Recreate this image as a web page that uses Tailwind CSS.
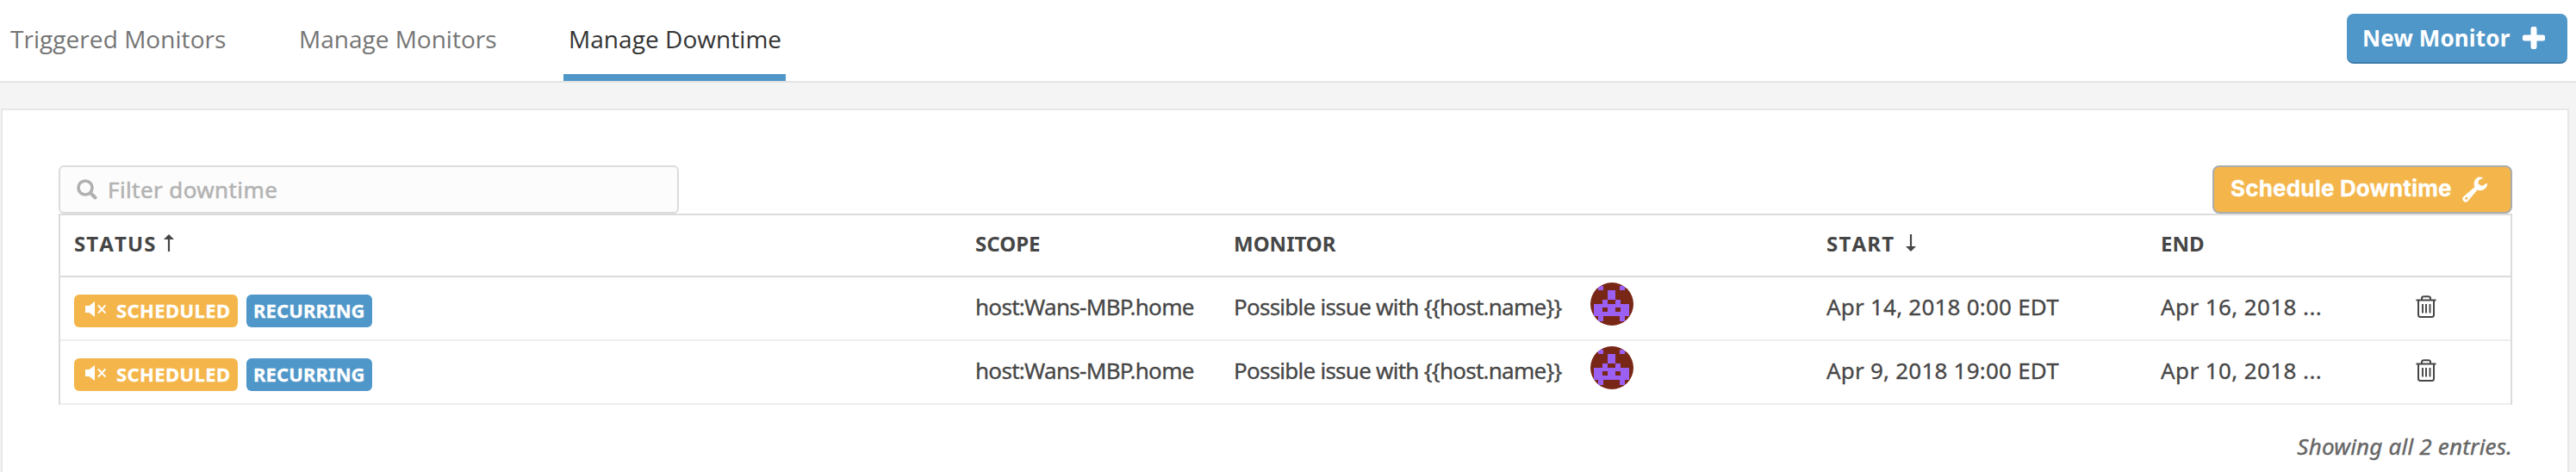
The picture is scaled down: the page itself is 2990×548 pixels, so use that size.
<!DOCTYPE html>
<html lang="en">
<head>
<meta charset="utf-8">
<title>Manage Downtime</title>
<script src="https://cdn.jsdelivr.net/npm/@tailwindcss/browser@4"></script>
</head>
<body class="h-[548px] w-[2990px] overflow-hidden bg-[#f4f4f4] font-['Noto_Sans',sans-serif] text-[26px] leading-[36px] text-[#464646]">
<svg class="hidden">
  <symbol id="avatar" viewBox="0 0 50 50"><rect width="50" height="50" fill="#782615"/><path fill="#9b5ff2" d="M9 4h6v5H9zM34 4h6v5h-6zM20 9h9v11h6v5h10v14h-5v6h-6v-6H15v6H9v-6H4V25h10v-5h6z"/><path fill="#782615" d="M20 20h9v5h-9zM14 29h6v5h-6zM29 29h6v5h-6z"/></symbol>
  <symbol id="mute" viewBox="0 0 24 18"><path fill="#fff" d="M0 5h4.500L11 0v18l-6.500-5H0z"/><path stroke="#fff" stroke-width="1.900" fill="none" d="M15 4.500l8.500 9M23.500 4.500L15 13.500"/></symbol>
  <symbol id="trash" viewBox="0 0 24 26"><g fill="none" stroke="#464646" stroke-width="2"><path d="M.5 5.500h23M7 5V3.500Q7 1.200 9.500 1.200h5Q17 1.200 17 3.500V5M3 6v16.500Q3 25 5.500 25h13Q21 25 21 22.500V6"/><path d="M8 10v10.500M12 10v10.500M16.500 10v10.500" stroke-width="1.900"/></g></symbol>
</svg>
<header class="flex h-24 justify-between border-b-2 border-[#e4e4e4] bg-white font-['Open_Sans',sans-serif]">
  <nav class="flex items-start pl-[5px] text-[28px] leading-[38px] whitespace-nowrap text-[#757575]">
    <a class="mr-[71px] h-[94px] w-[264px] px-[7px] pt-[26px] tracking-[0.05px]">Triggered Monitors</a>
    <a class="mr-[72px] h-[94px] w-[242px] px-[7px] pt-[26px]">Manage Monitors</a>
    <a class="h-[94px] w-[258px] border-b-8 border-[#5097c9] px-[6px] pt-[26px] tracking-[0.05px] text-[#333]">Manage Downtime</a>
  </nav>
  <button class="mt-4 mr-[10px] flex h-[58px] w-[256px] items-center rounded-lg border-b-2 border-[#3e7ca8] bg-[#5097c9] pl-[18px] font-['Noto_Sans',sans-serif] text-[26px] font-bold tracking-[0.15px] whitespace-nowrap text-white">
    <span class="w-[186px] text-left">New Monitor</span>
    <svg class="h-[26px] w-[26px]" viewBox="0 0 26 26"><path d="M13 3v20M3 13h20" stroke="#fff" stroke-width="7" stroke-linecap="round"/></svg>
  </button>
</header>
<main class="mt-[30px] ml-[1px] h-[440px] w-[2981px] border-2 border-[#e7e7e7] bg-white pl-[65px]">
  <div class="mt-16 flex w-[2848px] justify-between">
    <div class="flex h-14 w-[720px] items-center rounded-md border-2 border-[#dcdcdc] bg-[#fcfcfc] pl-[19px] text-[#b3b3b3]">
      <svg class="mr-3 h-6 w-6" viewBox="0 0 24 24" fill="none" stroke="#b0b0b0" stroke-linecap="round"><circle cx="10" cy="10" r="8" stroke-width="3.600"/><path d="M16.500 16.500l5 5" stroke-width="4"/></svg>
      <span class="tracking-[0.4px] [-webkit-text-stroke:0.5px]">Filter downtime</span>
    </div>
    <button class="flex h-14 w-[348px] items-center rounded-lg border-2 border-[#acacac] bg-[#f4b64b] pl-[19px] font-['Inter',sans-serif] text-[26px] font-bold tracking-[0.18px] whitespace-nowrap text-white">
      <span class="w-[269px] pb-0.5 text-left [-webkit-text-stroke:0.3px]">Schedule Downtime</span>
      <svg class="h-[30px] w-[30px]" viewBox="0 0 30 30"><path fill="#fff" fill-rule="evenodd" d="M24.500 1.200Q16 -1.500 14 6Q13 9 14.500 12L1.200 23.500Q-1 26 1.500 28.500Q4 31 6.500 28.500L17.500 15.500Q23 17.500 27 13.500Q29.500 11 29 7.500L23 11L18.500 8.500L19 4.500ZM4.800 23.800a1.500 1.500 0 1 0 .1 0Z"/></svg>
    </button>
  </div>
  <table class="w-[2848px] table-fixed border-separate border-spacing-0 border-x-2 border-t-2 border-[#dcdcdc] text-left whitespace-nowrap">
    <colgroup><col class="w-[1046px]"><col class="w-[300px]"><col class="w-[688px]"><col class="w-[388px]"><col class="w-[296px]"><col></colgroup>
    <thead><tr class="h-[72px] text-[24px] font-bold">
      <th class="border-b-2 border-[#dcdcdc] px-4 pb-1"><div class="flex items-center"><span class="tracking-[1.1px] [font-kerning:none]">STATUS</span><svg class="mb-0.5 ml-2 h-5 w-3" viewBox="0 0 12 20"><path d="M6 20V3" stroke="#464646" stroke-width="2.200"/><path d="M6 0l6 6H0z" fill="#464646"/></svg></div></th>
      <th class="border-b-2 border-[#dcdcdc] px-4 pb-1">SCOPE</th>
      <th class="border-b-2 border-[#dcdcdc] px-4 pb-1">MONITOR</th>
      <th class="border-b-2 border-[#dcdcdc] px-4 pb-1"><div class="flex items-center"><span class="tracking-[1.2px] [font-kerning:none]">START</span><svg class="mb-0.5 ml-[13px] h-5 w-3" viewBox="0 0 12 20"><path d="M6 0V17" stroke="#464646" stroke-width="2.200"/><path d="M6 20l6-6H0z" fill="#464646"/></svg></div></th>
      <th class="border-b-2 border-[#dcdcdc] px-4 pb-1">END</th>
      <th class="border-b-2 border-[#dcdcdc]"></th>
    </tr></thead>
    <tbody class="[-webkit-text-stroke:0.3px]">
      <tr class="h-[74px]">
        <td class="border-b-2 border-[#eee] px-4 pb-1"><div class="flex gap-[10px] pt-[10px] text-[22px] font-bold text-white"><span class="flex h-[38px] w-[190px] items-center rounded-md bg-[#f4b64b] pl-[13px] tracking-[0.4px]"><svg class="mr-3 mb-1 h-[18px] w-6"><use href="#mute"/></svg><span class="pb-0.5">SCHEDULED</span></span><span class="flex h-[38px] w-[146px] items-center rounded-md bg-[#5097c9] pb-0.5 pl-2 tracking-[0.1px]">RECURRING</span></div></td>
        <td class="border-b-2 border-[#eee] px-4 pb-1 tracking-[-0.7px]">host:Wans-MBP.home</td>
        <td class="border-b-2 border-[#eee] px-4 pb-1"><div class="flex items-center"><span class="w-[414px] tracking-[-0.75px]">Possible issue with {{host.name}}</span><svg class="mb-[6px] h-[50px] w-[50px] rounded-full"><use href="#avatar"/></svg></div></td>
        <td class="border-b-2 border-[#eee] px-4 pb-1 tracking-[0.22px]">Apr 14, 2018 0:00 EDT</td>
        <td class="border-b-2 border-[#eee] px-4 pb-1 tracking-[0.4px]">Apr 16, 2018 ...</td>
        <td class="border-b-2 border-[#eee] px-4 pb-1"><svg class="h-[26px] w-6"><use href="#trash"/></svg></td>
      </tr>
      <tr class="h-[74px]">
        <td class="border-b-2 border-[#eee] px-4 pb-1"><div class="flex gap-[10px] pt-[10px] text-[22px] font-bold text-white"><span class="flex h-[38px] w-[190px] items-center rounded-md bg-[#f4b64b] pl-[13px] tracking-[0.4px]"><svg class="mr-3 mb-1 h-[18px] w-6"><use href="#mute"/></svg><span class="pb-0.5">SCHEDULED</span></span><span class="flex h-[38px] w-[146px] items-center rounded-md bg-[#5097c9] pb-0.5 pl-2 tracking-[0.1px]">RECURRING</span></div></td>
        <td class="border-b-2 border-[#eee] px-4 pb-1 tracking-[-0.7px]">host:Wans-MBP.home</td>
        <td class="border-b-2 border-[#eee] px-4 pb-1"><div class="flex items-center"><span class="w-[414px] tracking-[-0.75px]">Possible issue with {{host.name}}</span><svg class="mb-[6px] h-[50px] w-[50px] rounded-full"><use href="#avatar"/></svg></div></td>
        <td class="border-b-2 border-[#eee] px-4 pb-1 tracking-[0.22px]">Apr 9, 2018 19:00 EDT</td>
        <td class="border-b-2 border-[#eee] px-4 pb-1 tracking-[0.4px]">Apr 10, 2018 ...</td>
        <td class="border-b-2 border-[#eee] px-4 pb-1"><svg class="h-[26px] w-6"><use href="#trash"/></svg></td>
      </tr>
    </tbody>
  </table>
  <p class="mt-[30px] w-[2848px] text-right tracking-[0.2px] text-[#666] italic [-webkit-text-stroke:0.4px]">Showing all 2 entries.</p>
</main>
</body>
</html>
